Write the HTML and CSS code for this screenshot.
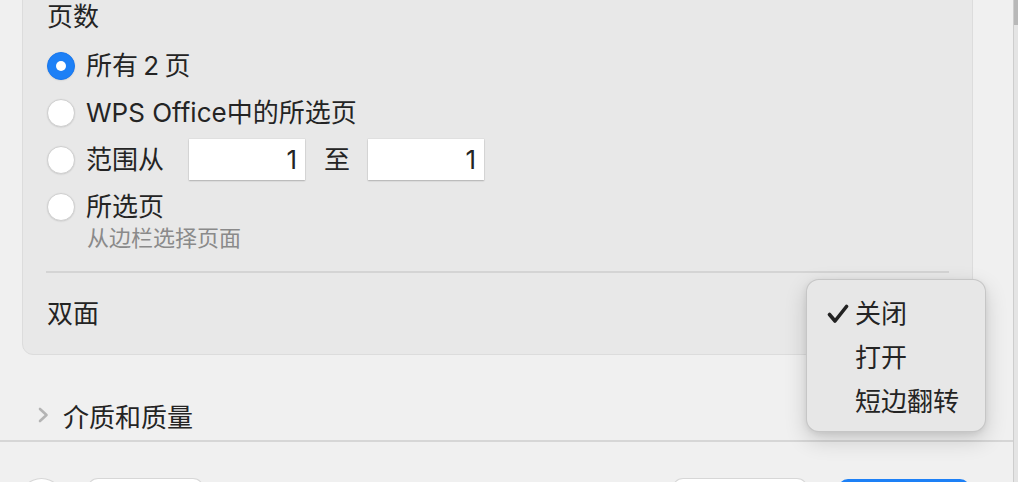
FILE: index.html
```html
<!DOCTYPE html>
<html lang="zh">
<head>
<meta charset="utf-8">
<title>打印</title>
<link rel="stylesheet" href="styles.css">
</head>
<body>
<div class="frame">
  <div class="main">
    <section class="panel">
      <h2 class="heading">页数</h2>
      <div class="options">
        <div class="opt"><span class="radio on"></span><span class="label tight">所有 2 页</span></div>
        <div class="opt"><span class="radio"></span><span class="label">WPS Office中的所选页</span></div>
        <div class="opt"><span class="radio"></span><span class="label">范围从</span><span class="field first">1</span><span class="to">至</span><span class="field">1</span></div>
        <div class="opt"><span class="radio"></span><span class="label">所选页</span></div>
      </div>
      <p class="hint">从边栏选择页面</p>
      <div class="sep"></div>
      <div class="duplex">双面</div>
    </section>
    <div class="disclosure">
      <svg class="chev" width="11" height="16" viewBox="0 0 11 16"><path d="M2 2 L8.5 8 L2 14" fill="none" stroke="#b4b4b4" stroke-width="2.6" stroke-linecap="round" stroke-linejoin="round"/></svg>
      <span>介质和质量</span>
    </div>
    <div class="hline"></div>
    <div class="footer">
      <span class="help"></span>
      <span class="btn b1"></span>
      <span class="spacer"></span>
      <span class="btn b3"></span>
      <span class="btn primary"></span>
    </div>
  </div>
  <div class="scroll"><div class="thumb"></div></div>
  <div class="menu">
    <div class="item checked">
      <svg class="check" width="22" height="20" viewBox="0 0 22 20"><path d="M2.5 10.5 L8 17 L19.5 2.5" fill="none" stroke="#222" stroke-width="3.6" stroke-linecap="round" stroke-linejoin="round"/></svg>
      关闭
    </div>
    <div class="item">打开</div>
    <div class="item">短边翻转</div>
  </div>
</div>
</body>
</html>
```
FILE: styles.css
```css
* { box-sizing: border-box; }
html, body {
  margin: 0;
  padding: 0;
  background: #f0f0f0;
}
body {
  font-family: "Inter", "Noto Sans CJK SC", sans-serif;
  color: #242424;
  font-size: 26px;
}
.frame {
  position: relative;
  width: 1018px;
  height: 482px;
  overflow: hidden;
  display: flex;
}
.main {
  width: 1013px;
  display: flex;
  flex-direction: column;
}
.main > * { flex-shrink: 0; }
.panel {
  margin: -14px 40px 0 22px;
  padding: 13px 23px 0;
  background: #e8e8e8;
  border: 1px solid #dcdcdc;
  border-radius: 11px;
}
.heading {
  margin: 0 0 8px 1px;
  font-size: 26px;
  font-weight: 400;
  line-height: 34px;
}
.options {
  display: flex;
  flex-direction: column;
}
.opt {
  height: 47px;
  display: flex;
  align-items: center;
  margin-left: 1px;
}
.radio {
  width: 28px;
  height: 28px;
  border-radius: 50%;
  background: #ffffff;
  border: 1px solid #cfcfcf;
  box-shadow: 0 0.5px 1.5px rgba(0,0,0,0.12);
  margin-right: 11px;
  flex: none;
  position: relative;
}
.radio.on {
  background: #1d80f6;
  border-color: #1877ef;
}
.radio.on::after {
  content: "";
  position: absolute;
  left: 8px;
  top: 8px;
  width: 10px;
  height: 10px;
  border-radius: 50%;
  background: #fff;
}
.label {
  line-height: 34px;
  white-space: nowrap;
}
.label.tight { word-spacing: -2px; }
.field {
  width: 116px;
  height: 41px;
  background: #fff;
  box-shadow: 0 1px 1.5px rgba(0,0,0,0.22), 0 0 0 0.5px rgba(0,0,0,0.06);
  text-align: right;
  padding-right: 8px;
  line-height: 41px;
  font-size: 26px;
}
.field.first { margin-left: 25px; }
.to {
  margin: 0 18px 0 19px;
  line-height: 34px;
}
.hint {
  margin: -3px 0 0 41px;
  font-size: 22px;
  line-height: 22px;
  color: #8a8a8a;
}
.sep {
  margin-top: 22px;
  height: 2px;
  background: #d4d4d4;
}
.duplex {
  height: 81px;
  line-height: 81px;
  margin-left: 1px;
}
.disclosure {
  margin-top: 40px;
  height: 40px;
  display: flex;
  align-items: center;
  padding-left: 38px;
}
.chev { margin-right: 14px; flex: none; }
.hline {
  margin-top: 5px;
  height: 2px;
  background: #d6d6d6;
}
.footer {
  padding-top: 37px;
  display: flex;
  align-items: flex-start;
}
.help {
  width: 43px;
  height: 43px;
  border-radius: 50%;
  background: #fff;
  margin-left: 20px;
  box-shadow: 0 0 0 1px rgba(0,0,0,0.1);
}
.btn {
  height: 40px;
  border-radius: 10px;
  background: #fff;
  box-shadow: 0 0 0 1px rgba(0,0,0,0.1);
}
.b1 { width: 115px; margin-left: 25px; }
.spacer { flex: 1; }
.b3 { width: 134px; }
.primary {
  width: 132px;
  margin-left: 31px;
  margin-right: 43px;
  background: #1d80f6;
  box-shadow: none;
}
.scroll {
  width: 5px;
  border-left: 1px solid #cdcdcd;
  background: #e4e4e4;
}
.thumb {
  height: 25px;
  background: #b8b8b8;
}
.menu {
  position: absolute;
  left: 806px;
  top: 279px;
  width: 180px;
  height: 153px;
  padding-top: 12px;
  background: #e7e7e7;
  border: 1px solid rgba(0,0,0,0.14);
  border-radius: 13px;
  box-shadow: 0 8px 22px rgba(0,0,0,0.16), 0 2px 6px rgba(0,0,0,0.08);
}
.item {
  position: relative;
  height: 44px;
  line-height: 44px;
  padding-left: 48px;
  white-space: nowrap;
}
.check {
  position: absolute;
  left: 20px;
  top: 12px;
}
```
